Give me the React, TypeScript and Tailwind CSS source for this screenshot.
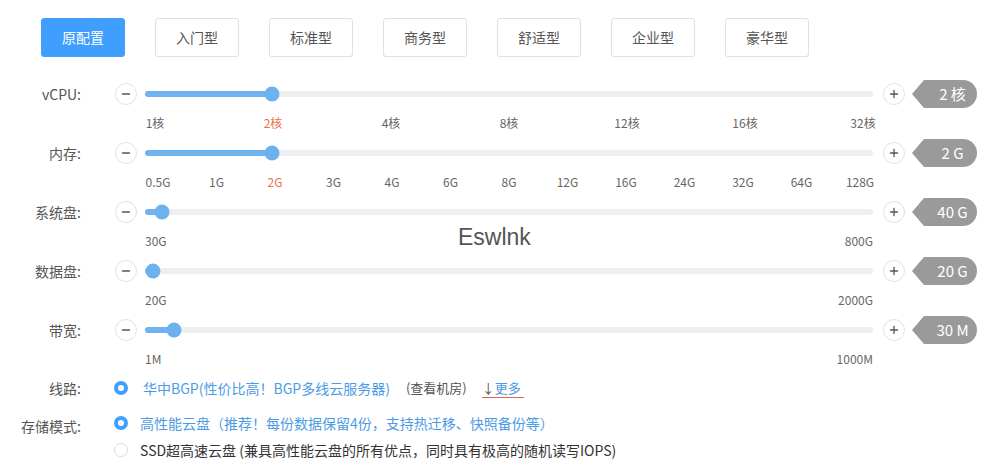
import { Minus, Plus } from "lucide-react";

const presets = ["原配置", "入门型", "标准型", "商务型", "舒适型", "企业型", "豪华型"];

type SliderRow = {
  label: string;
  percent: number;
  value: string;
  marks: string[];
  active?: number;
  markWidth?: string;
};

const sliders: SliderRow[] = [
  { label: "vCPU:", percent: 17.4, value: "2 核", marks: ["1核", "2核", "4核", "8核", "12核", "16核", "32核"], active: 1, markWidth: "w-5" },
  {
    label: "内存:",
    percent: 17.4,
    value: "2 G",
    marks: ["0.5G", "1G", "2G", "3G", "4G", "6G", "8G", "12G", "16G", "24G", "32G", "64G", "128G"],
    active: 2,
    markWidth: "w-[26px]",
  },
  { label: "系统盘:", percent: 2.3, value: "40 G", marks: ["30G", "800G"] },
  { label: "数据盘:", percent: 1.1, value: "20 G", marks: ["20G", "2000G"] },
  { label: "带宽:", percent: 4, value: "30 M", marks: ["1M", "1000M"] },
];

function RoundBtn({ children }: { children: React.ReactNode }) {
  return (
    <button className="flex h-[22px] w-[22px] shrink-0 items-center justify-center rounded-full border border-[#e2e2e2] bg-white text-[#555]">
      {children}
    </button>
  );
}

function ValueTag({ text }: { text: string }) {
  return (
    <div className="flex h-7 items-center">
      <div className="h-0 w-0 border-y-[14px] border-r-[12px] border-y-transparent border-r-[#9a9a9a]" />
      <div className="flex h-7 w-[53px] items-center justify-center rounded-r-[14px] bg-[#9a9a9a] pl-1 text-[15px] text-white">
        {text}
      </div>
    </div>
  );
}

function Slider({ row }: { row: SliderRow }) {
  return (
    <div className="flex flex-col">
      <div className="flex h-7 items-center">
        <div className="w-[81px] shrink-0 text-right text-[14px] text-[#555]">{row.label}</div>
        <div className="ml-[34px]">
          <RoundBtn>
            <Minus size={12} strokeWidth={2.6} />
          </RoundBtn>
        </div>
        <div className="relative ml-2 h-1.5 w-[728px] rounded-full bg-[#efefef]">
          <div className="h-1.5 rounded-full bg-[#71b3ef]" style={{ width: `${row.percent}%` }} />
          <div
            className="absolute top-1/2 h-[15px] w-[15px] -translate-x-1/2 -translate-y-1/2 rounded-full bg-[#6eb1ef]"
            style={{ left: `${row.percent}%` }}
          />
        </div>
        <div className="ml-2.5">
          <RoundBtn>
            <Plus size={12} strokeWidth={2.6} />
          </RoundBtn>
        </div>
        <div className="ml-[7px]">
          <ValueTag text={row.value} />
        </div>
      </div>
      <div className="mt-[7px] ml-[145px] flex h-4 w-[728px] items-center justify-between text-[12px] text-[#666]">
        {row.marks.map((m, i) => (
          <span
            key={m}
            className={`${row.markWidth ?? ""} flex justify-center whitespace-nowrap ${i === row.active ? "text-[#ee7046]" : ""}`}
          >
            {m}
          </span>
        ))}
      </div>
    </div>
  );
}

function Radio({ checked }: { checked?: boolean }) {
  return checked ? (
    <span className="flex h-3.5 w-3.5 shrink-0 items-center justify-center rounded-full bg-[#409eff]">
      <span className="h-1.5 w-1.5 rounded-full bg-white" />
    </span>
  ) : (
    <span className="h-3.5 w-3.5 shrink-0 rounded-full border border-[#dcdcdc] bg-white" />
  );
}

export default function App() {
  return (
    <div
      className="relative h-[473px] w-[990px] bg-white pt-[18px]"
      style={{ fontFamily: '"Noto Sans CJK SC", "Noto Sans", sans-serif' }}
    >
      <div className="ml-[41px] flex gap-[30px]">
        {presets.map((p, i) => (
          <button
            key={p}
            className={`h-[39px] w-[84px] rounded-[3px] border text-[14px] ${
              i === 0 ? "border-[#409eff] bg-[#409eff] text-white" : "border-[#e0e0e0] bg-white text-[#555]"
            }`}
          >
            {p}
          </button>
        ))}
      </div>

      <div className="mt-[23px] flex flex-col gap-[8px]">
        {sliders.map((s) => (
          <Slider key={s.label} row={s} />
        ))}
      </div>

      {/* watermark */}
      <div
        className="absolute left-[458px] top-[220px] text-[23px] text-[#555]"
        style={{ fontFamily: '"Liberation Sans", Arial, sans-serif' }}
      >
        Eswlnk
      </div>

      <div className="mt-[11px] flex h-5 items-center">
        <div className="w-[81px] shrink-0 text-right text-[14px] text-[#555]">线路:</div>
        <div className="ml-[33px] flex items-center">
          <Radio checked />
          <span className="ml-[15px] text-[14px] text-[#4c9be6]">华中BGP(性价比高！BGP多线云服务器)</span>
          <span className="ml-4 text-[13px] text-[#555]">(查看机房)</span>
          <span className="ml-[15px] border-b border-[#e8604f] pr-[3px] text-[13px] leading-[18px] text-[#4c9be6]">
            <span className="text-[#555]">↓</span>更多
          </span>
        </div>
      </div>

      <div className="mt-[15px] flex">
        <div className="mt-[3px] w-[81px] shrink-0 text-right text-[14px] text-[#555]">存储模式:</div>
        <div className="ml-[33px] flex flex-col gap-[7px]">
          <div className="flex h-5 items-center">
            <Radio checked />
            <span className="ml-3 text-[14px] text-[#4c9be6]">
              高性能云盘（推荐！每份数据保留4份，支持热迁移、快照备份等）
            </span>
          </div>
          <div className="flex h-5 items-center">
            <Radio />
            <span className="ml-3 text-[14px] text-[#333]">
              SSD超高速云盘 (兼具高性能云盘的所有优点，同时具有极高的随机读写IOPS)
            </span>
          </div>
        </div>
      </div>
    </div>
  );
}
